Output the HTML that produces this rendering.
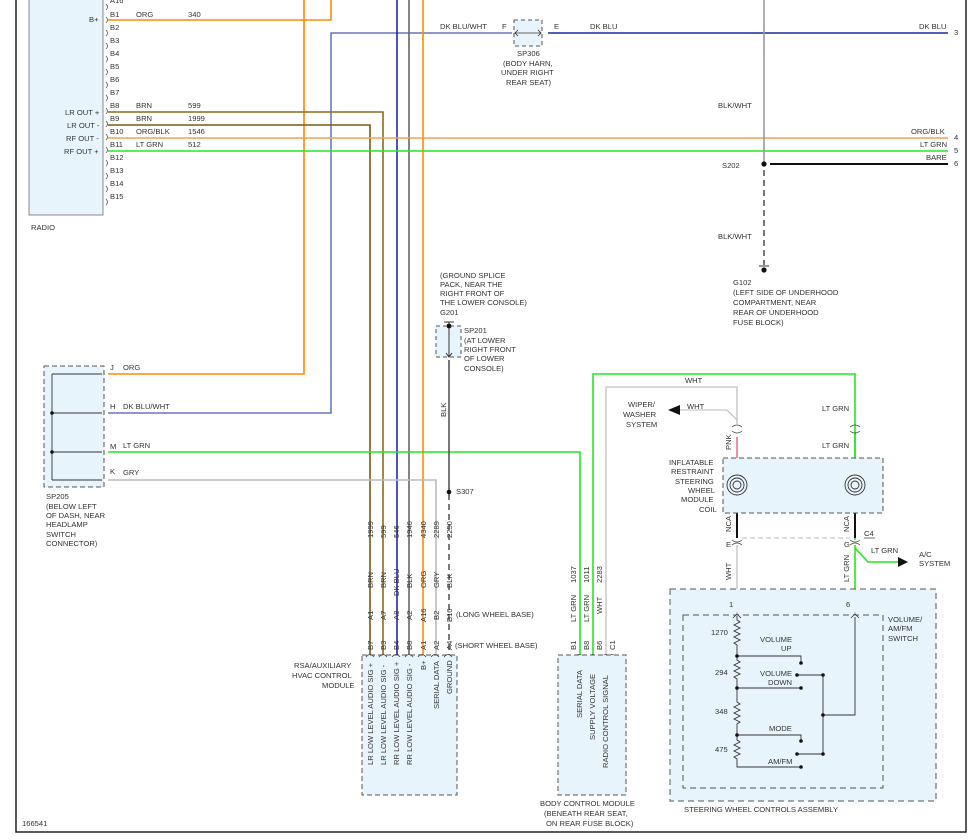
<!DOCTYPE html>
<html><head><meta charset="utf-8"><style>
html,body{margin:0;padding:0;background:#fff;}
svg{display:block;}
text{font-family:"Liberation Sans",sans-serif;font-size:7.6px;fill:#333;}
</style></head><body>
<svg width="973" height="840" viewBox="0 0 973 840" xmlns="http://www.w3.org/2000/svg">
<path d="M16 0 V832 H966 V0" fill="none" stroke="#222" stroke-width="1.5"/>

<rect x="29" y="-2" width="74" height="217" fill="#e8f4fc" stroke="#888" stroke-width="1"/>
<text x="31" y="230">RADIO</text>
<g>
<text x="110" y="3">A16</text>
<text x="89" y="22">B+</text>
<text x="65" y="115">LR OUT +</text>
<text x="67" y="128">LR OUT -</text>
<text x="66" y="141">RF OUT -</text>
<text x="64" y="154">RF OUT +</text>
<text x="110" y="17">B1</text><text x="110" y="30">B2</text><text x="110" y="43">B3</text><text x="110" y="56">B4</text><text x="110" y="69">B5</text><text x="110" y="82">B6</text><text x="110" y="95">B7</text><text x="110" y="108">B8</text><text x="110" y="121">B9</text><text x="110" y="134">B10</text><text x="110" y="147">B11</text><text x="110" y="160">B12</text><text x="110" y="173">B13</text><text x="110" y="186">B14</text><text x="110" y="199">B15</text>
<text x="136" y="17">ORG</text><text x="188" y="17">340</text>
<text x="136" y="108">BRN</text><text x="188" y="108">599</text>
<text x="136" y="121">BRN</text><text x="188" y="121">1999</text>
<text x="136" y="134">ORG/BLK</text><text x="188" y="134">1546</text>
<text x="136" y="147">LT GRN</text><text x="188" y="147">512</text>
</g>
<g fill="none" stroke="#555" stroke-width="0.8">
<path d="M106 4 q3 3 0 6 M106 17 q3 3 0 6 M106 30 q3 3 0 6 M106 43 q3 3 0 6 M106 56 q3 3 0 6 M106 69 q3 3 0 6 M106 82 q3 3 0 6 M106 95 q3 3 0 6 M106 108 q3 3 0 6 M106 121 q3 3 0 6 M106 134 q3 3 0 6 M106 147 q3 3 0 6 M106 160 q3 3 0 6 M106 173 q3 3 0 6 M106 186 q3 3 0 6 M106 199 q3 3 0 6"/>
</g>

<g fill="none" stroke-width="1.6">
<path d="M108 20 H331 V0" stroke="#ff8a00"/>
<path d="M304 0 V374 H108" stroke="#ff8a00"/>
<path d="M108 413 H331 V33 H512" stroke="#4a5ab0" stroke-width="1.3"/>
<path d="M548 33 H948" stroke="#1a2a9a" stroke-width="1.6"/>
<path d="M108 112 H383 V655" stroke="#8a6a20"/>
<path d="M108 125 H370 V655" stroke="#7a5a10"/>
<path d="M397 0 V655" stroke="#1a2aa8"/>
<path d="M409 0 V655" stroke="#666"/>
<path d="M423 0 V655" stroke="#ff8a00"/>
<path d="M108 138 H948" stroke="#f4a050"/>
<path d="M108 151 H948" stroke="#22e822"/>
<path d="M764 0 V163" stroke="#999"/>
<path d="M770 164 H948" stroke="#111" stroke-width="2"/>
<path d="M764 170 V265" stroke="#333" stroke-dasharray="6,4" stroke-width="1.3"/>
<path d="M108 452 H580 V655" stroke="#22e822"/>
<path d="M108 480 H436 V655" stroke="#bbb"/>
<path d="M593 655 V374 H855 V540" stroke="#22e822"/>
<path d="M606 655 V387 H737 V424" stroke="#ccc"/>
<path d="M449 360 V491" stroke="#555"/>
<path d="M449 494 V655" stroke="#333" stroke-dasharray="6,4" stroke-width="1.3"/>
<path d="M855 545 V615" stroke="#22e822"/>
<path d="M855 548 L868 562 H900" stroke="#22e822"/>
<path d="M737 545 V612" stroke="#ccc"/>
<path d="M727 410 L737 420 M727 410 H680" stroke="#bbb" stroke-width="1"/>
<path d="M737 437 V458" stroke="#f27088"/>
<path d="M855 432 V458" stroke="#22e822"/>
<path d="M737 458 V513 M855 458 V513" stroke="#333" stroke-width="1"/>
<path d="M737 513 V538 M855 513 V538" stroke="#111" stroke-width="2"/>
</g>
<text x="440" y="29">DK BLU/WHT</text>
<text x="502" y="29">F</text><text x="554" y="29">E</text>
<text x="590" y="29">DK BLU</text>
<text x="919" y="29">DK BLU</text>
<text x="954" y="35">3</text>
<text x="911" y="134">ORG/BLK</text><text x="954" y="140">4</text>
<text x="920" y="147">LT GRN</text><text x="954" y="153">5</text>
<text x="926" y="160">BARE</text><text x="954" y="166">6</text>
<text x="718" y="108">BLK/WHT</text>
<text x="718" y="239">BLK/WHT</text>
<text x="722" y="168">S202</text>
<circle cx="764" cy="164" r="2.6" fill="#111"/>
<circle cx="764" cy="270" r="2.6" fill="#111"/>
<path d="M759 266 H769" stroke="#333"/>
<text x="733" y="285">G102</text>
<text x="733" y="295">(LEFT SIDE OF UNDERHOOD</text>
<text x="733" y="305">COMPARTMENT, NEAR</text>
<text x="733" y="315">REAR OF UNDERHOOD</text>
<text x="733" y="325">FUSE BLOCK)</text>
<rect x="514" y="20" width="28" height="26" fill="#e8f4fc" stroke="#555" stroke-dasharray="4,3"/>
<path d="M515 33 H541 M518 30 L515 33 L518 36 M538 30 L541 33 L538 36" stroke="#333" fill="none" stroke-width="0.8"/>
<text x="517" y="56">SP306</text>
<text x="503" y="66">(BODY HARN,</text>
<text x="501" y="75">UNDER RIGHT</text>
<text x="506" y="85">REAR SEAT)</text>

<rect x="44" y="366" width="60" height="121" fill="#e8f4fc" stroke="#555" stroke-dasharray="5,3"/>
<path d="M52 374 V480 M52 374 H102 M52 413 H102 M52 452 H102 M52 480 H102" stroke="#333" fill="none" stroke-width="0.9"/>
<circle cx="52" cy="413" r="1.8" fill="#111"/><circle cx="52" cy="452" r="1.8" fill="#111"/>
<text x="110" y="370">J</text><text x="123" y="370">ORG</text>
<text x="110" y="409">H</text><text x="123" y="409">DK BLU/WHT</text>
<text x="110" y="449">M</text><text x="123" y="448">LT GRN</text>
<text x="110" y="474">K</text><text x="123" y="475">GRY</text>
<text x="46" y="499">SP205</text>
<text x="46" y="509">(BELOW LEFT</text>
<text x="46" y="518">OF DASH, NEAR</text>
<text x="46" y="527">HEADLAMP</text>
<text x="46" y="537">SWITCH</text>
<text x="46" y="546">CONNECTOR)</text>

<text x="440" y="278">(GROUND SPLICE</text>
<text x="440" y="287">PACK, NEAR THE</text>
<text x="440" y="296">RIGHT FRONT OF</text>
<text x="440" y="305">THE LOWER CONSOLE)</text>
<text x="440" y="315">G201</text>
<rect x="436" y="326" width="25" height="31" fill="#e8f4fc" stroke="#555" stroke-dasharray="4,3"/>
<path d="M449 322 V357 M444 322 H454 M446 353 L449 357 L452 353" stroke="#333" fill="none"/>
<circle cx="449" cy="326" r="2.4" fill="#111"/>
<text x="464" y="333">SP201</text>
<text x="464" y="343">(AT LOWER</text>
<text x="464" y="352">RIGHT FRONT</text>
<text x="464" y="361">OF LOWER</text>
<text x="464" y="371">CONSOLE)</text>
<text transform="translate(446,417) rotate(-90)">BLK</text>
<circle cx="449" cy="492" r="2.3" fill="#111"/>
<text x="456" y="494">S307</text>

<rect x="362" y="655" width="95" height="140" fill="#e8f4fc" stroke="#555" stroke-dasharray="5,3"/>
<g>
<text transform="translate(373,538) rotate(-90)">1999</text>
<text transform="translate(386,538) rotate(-90)">599</text>
<text transform="translate(399,538) rotate(-90)">546</text>
<text transform="translate(412,538) rotate(-90)">1946</text>
<text transform="translate(426,538) rotate(-90)">4340</text>
<text transform="translate(439,538) rotate(-90)">2289</text>
<text transform="translate(452,538) rotate(-90)">2250</text>
<text transform="translate(373,588) rotate(-90)">BRN</text>
<text transform="translate(386,588) rotate(-90)">BRN</text>
<text transform="translate(399,596) rotate(-90)">DK BLU</text>
<text transform="translate(412,588) rotate(-90)">BLK</text>
<text transform="translate(426,588) rotate(-90)">ORG</text>
<text transform="translate(439,588) rotate(-90)">GRY</text>
<text transform="translate(452,588) rotate(-90)">BLK</text>
<text transform="translate(373,620) rotate(-90)">A1</text>
<text transform="translate(386,620) rotate(-90)">A7</text>
<text transform="translate(399,620) rotate(-90)">A8</text>
<text transform="translate(412,620) rotate(-90)">A2</text>
<text transform="translate(426,622) rotate(-90)">A16</text>
<text transform="translate(439,620) rotate(-90)">B2</text>
<text transform="translate(452,622) rotate(-90)">B16</text>
<text transform="translate(373,650) rotate(-90)">B7</text>
<text transform="translate(386,650) rotate(-90)">B3</text>
<text transform="translate(399,650) rotate(-90)">B4</text>
<text transform="translate(412,650) rotate(-90)">B8</text>
<text transform="translate(426,650) rotate(-90)">A1</text>
<text transform="translate(439,650) rotate(-90)">A2</text>
<text transform="translate(452,650) rotate(-90)">A4</text>
<text transform="translate(373,765) rotate(-90)">LR LOW LEVEL AUDIO SIG +</text>
<text transform="translate(386,765) rotate(-90)">LR LOW LEVEL AUDIO SIG -</text>
<text transform="translate(399,765) rotate(-90)">RR LOW LEVEL AUDIO SIG +</text>
<text transform="translate(412,765) rotate(-90)">RR LOW LEVEL AUDIO SIG -</text>
<text transform="translate(426,670) rotate(-90)">B+</text>
<text transform="translate(439,709) rotate(-90)">SERIAL DATA</text>
<text transform="translate(452,694) rotate(-90)">GROUND</text>
</g>
<text x="456" y="617">(LONG WHEEL BASE)</text>
<text x="455" y="648">(SHORT WHEEL BASE)</text>
<text x="294" y="668">RSA/AUXILIARY</text>
<text x="292" y="678">HVAC CONTROL</text>
<text x="322" y="688">MODULE</text>
<g fill="none" stroke="#444" stroke-width="0.8">
<path d="M366 657 q4 -5 8 0 M379 657 q4 -5 8 0 M392 657 q4 -5 8 0 M405 657 q4 -5 8 0 M418 657 q4 -5 8 0 M431 657 q4 -5 8 0 M444 657 q4 -5 8 0"/>
<path d="M575 657 q4 -5 8 0 M589 657 q4 -5 8 0 M602 657 q4 -5 8 0 M608 657 q4 -5 8 0"/>
</g>

<rect x="558" y="655" width="68" height="140" fill="#e8f4fc" stroke="#555" stroke-dasharray="5,3"/>
<text transform="translate(576,583) rotate(-90)">1037</text>
<text transform="translate(589,583) rotate(-90)">1011</text>
<text transform="translate(602,583) rotate(-90)">2283</text>
<text transform="translate(576,622) rotate(-90)">LT GRN</text>
<text transform="translate(589,622) rotate(-90)">LT GRN</text>
<text transform="translate(602,614) rotate(-90)">WHT</text>
<text transform="translate(576,650) rotate(-90)">B1</text>
<text transform="translate(589,650) rotate(-90)">B8</text>
<text transform="translate(602,650) rotate(-90)">B6</text>
<text transform="translate(615,650) rotate(-90)">C1</text>
<text transform="translate(582,718) rotate(-90)">SERIAL DATA</text>
<text transform="translate(595,740) rotate(-90)">SUPPLY VOLTAGE</text>
<text transform="translate(608,768) rotate(-90)">RADIO CONTROL SIGNAL</text>
<text x="540" y="806">BODY CONTROL MODULE</text>
<text x="544" y="816">(BENEATH REAR SEAT,</text>
<text x="546" y="826">ON REAR FUSE BLOCK)</text>
<text x="22" y="826">166541</text>

<text x="685" y="383">WHT</text>
<text x="687" y="409">WHT</text>
<path d="M668 410 L680 405 V415 Z" fill="#111"/>
<text x="628" y="407">WIPER/</text>
<text x="623" y="417">WASHER</text>
<text x="626" y="427">SYSTEM</text>
<text x="822" y="411">LT GRN</text>
<text x="822" y="448">LT GRN</text>
<text transform="translate(731,450) rotate(-90)">PNK</text>
<path d="M732 427 q5 -4 10 0 M732 431 q5 4 10 0 M850 427 q5 -4 10 0 M850 431 q5 4 10 0" stroke="#444" fill="none" stroke-width="0.8"/>
<rect x="723" y="458" width="160" height="55" fill="#e8f4fc" stroke="#555" stroke-dasharray="5,3"/>
<g fill="none" stroke="#333" stroke-width="0.9">
<circle cx="737" cy="485" r="10"/><circle cx="737" cy="485" r="7"/><circle cx="737" cy="485" r="4"/>
<circle cx="855" cy="485" r="10"/><circle cx="855" cy="485" r="7"/><circle cx="855" cy="485" r="4"/>
</g>
<text x="669" y="465">INFLATABLE</text>
<text x="671" y="474">RESTRAINT</text>
<text x="675" y="484">STEERING</text>
<text x="688" y="493">WHEEL</text>
<text x="681" y="502">MODULE</text>
<text x="699" y="512">COIL</text>
<text transform="translate(731,532) rotate(-90)">NCA</text>
<text transform="translate(849,532) rotate(-90)">NCA</text>
<text x="726" y="547">E</text><text x="844" y="547">G</text>
<text x="864" y="536">C4</text>
<path d="M864 538 H875" stroke="#333" stroke-width="0.7"/>
<path d="M742 538 H850" stroke="#bbb" stroke-dasharray="5,3" fill="none"/>
<path d="M732 540 q5 4 10 0 M732 545 q5 -4 10 0 M850 540 q5 4 10 0 M850 545 q5 -4 10 0" stroke="#444" fill="none" stroke-width="0.8"/>
<text x="871" y="553">LT GRN</text>
<path d="M908 562 L898 557 V567 Z" fill="#111"/>
<text x="919" y="557">A/C</text>
<text x="919" y="566">SYSTEM</text>
<text transform="translate(731,580) rotate(-90)">WHT</text>
<text transform="translate(849,582) rotate(-90)">LT GRN</text>

<rect x="670" y="589" width="266" height="212" fill="#e8f4fc" stroke="#555" stroke-dasharray="6,4"/>
<rect x="683" y="615" width="200" height="173" fill="none" stroke="#555" stroke-dasharray="6,4"/>
<text x="729" y="607">1</text><text x="846" y="607">6</text>
<text x="888" y="622">VOLUME/</text>
<text x="888" y="631">AM/FM</text>
<text x="888" y="641">SWITCH</text>
<text x="684" y="812">STEERING WHEEL CONTROLS ASSEMBLY</text>
<path d="M737 612 V616 M855 612 V616" stroke="#ccc" stroke-width="1.6"/>
<path d="M733 618 L737 614 L741 618 M851 618 L855 614 L859 618" stroke="#333" fill="none" stroke-width="0.8"/>
<g fill="none" stroke="#333" stroke-width="0.9">
<path d="M737 616 V620 l3 2 l-6 3 l6 3 l-6 3 l6 3 l-6 3 l6 3 l-6 3 l3 2 V660 l3 2 l-6 3 l6 3 l-6 3 l6 3 l-6 3 l3 2 V702 l3 2 l-6 3 l6 3 l-6 3 l6 3 l-6 3 l6 3 l-3 2 V740 l3 2 l-6 3 l6 3 l-6 3 l6 3 l-6 3 l3 2 V767 H801"/>
<path d="M737 656 H801 V663 M737 688 H801 M737 735 H801 V741"/>
<path d="M797 675 H823 M797 754 H823 M823 675 V754 M823 715 H855 V617"/>
</g>
<g fill="#111">
<circle cx="737" cy="656" r="1.8"/><circle cx="737" cy="688" r="1.8"/><circle cx="737" cy="735" r="1.8"/>
<circle cx="801" cy="663" r="1.8"/><circle cx="797" cy="675" r="1.8"/><circle cx="801" cy="688" r="1.8"/>
<circle cx="823" cy="675" r="1.8"/><circle cx="823" cy="715" r="1.8"/><circle cx="823" cy="754" r="1.8"/>
<circle cx="801" cy="741" r="1.8"/><circle cx="797" cy="754" r="1.8"/><circle cx="801" cy="767" r="1.8"/>
</g>
<text x="711" y="635">1270</text>
<text x="715" y="675">294</text>
<text x="715" y="714">348</text>
<text x="715" y="752">475</text>
<text x="760" y="642">VOLUME</text>
<text x="781" y="651">UP</text>
<text x="760" y="676">VOLUME</text>
<text x="768" y="685">DOWN</text>
<text x="769" y="731">MODE</text>
<text x="768" y="764">AM/FM</text>
</svg>
</body></html>
